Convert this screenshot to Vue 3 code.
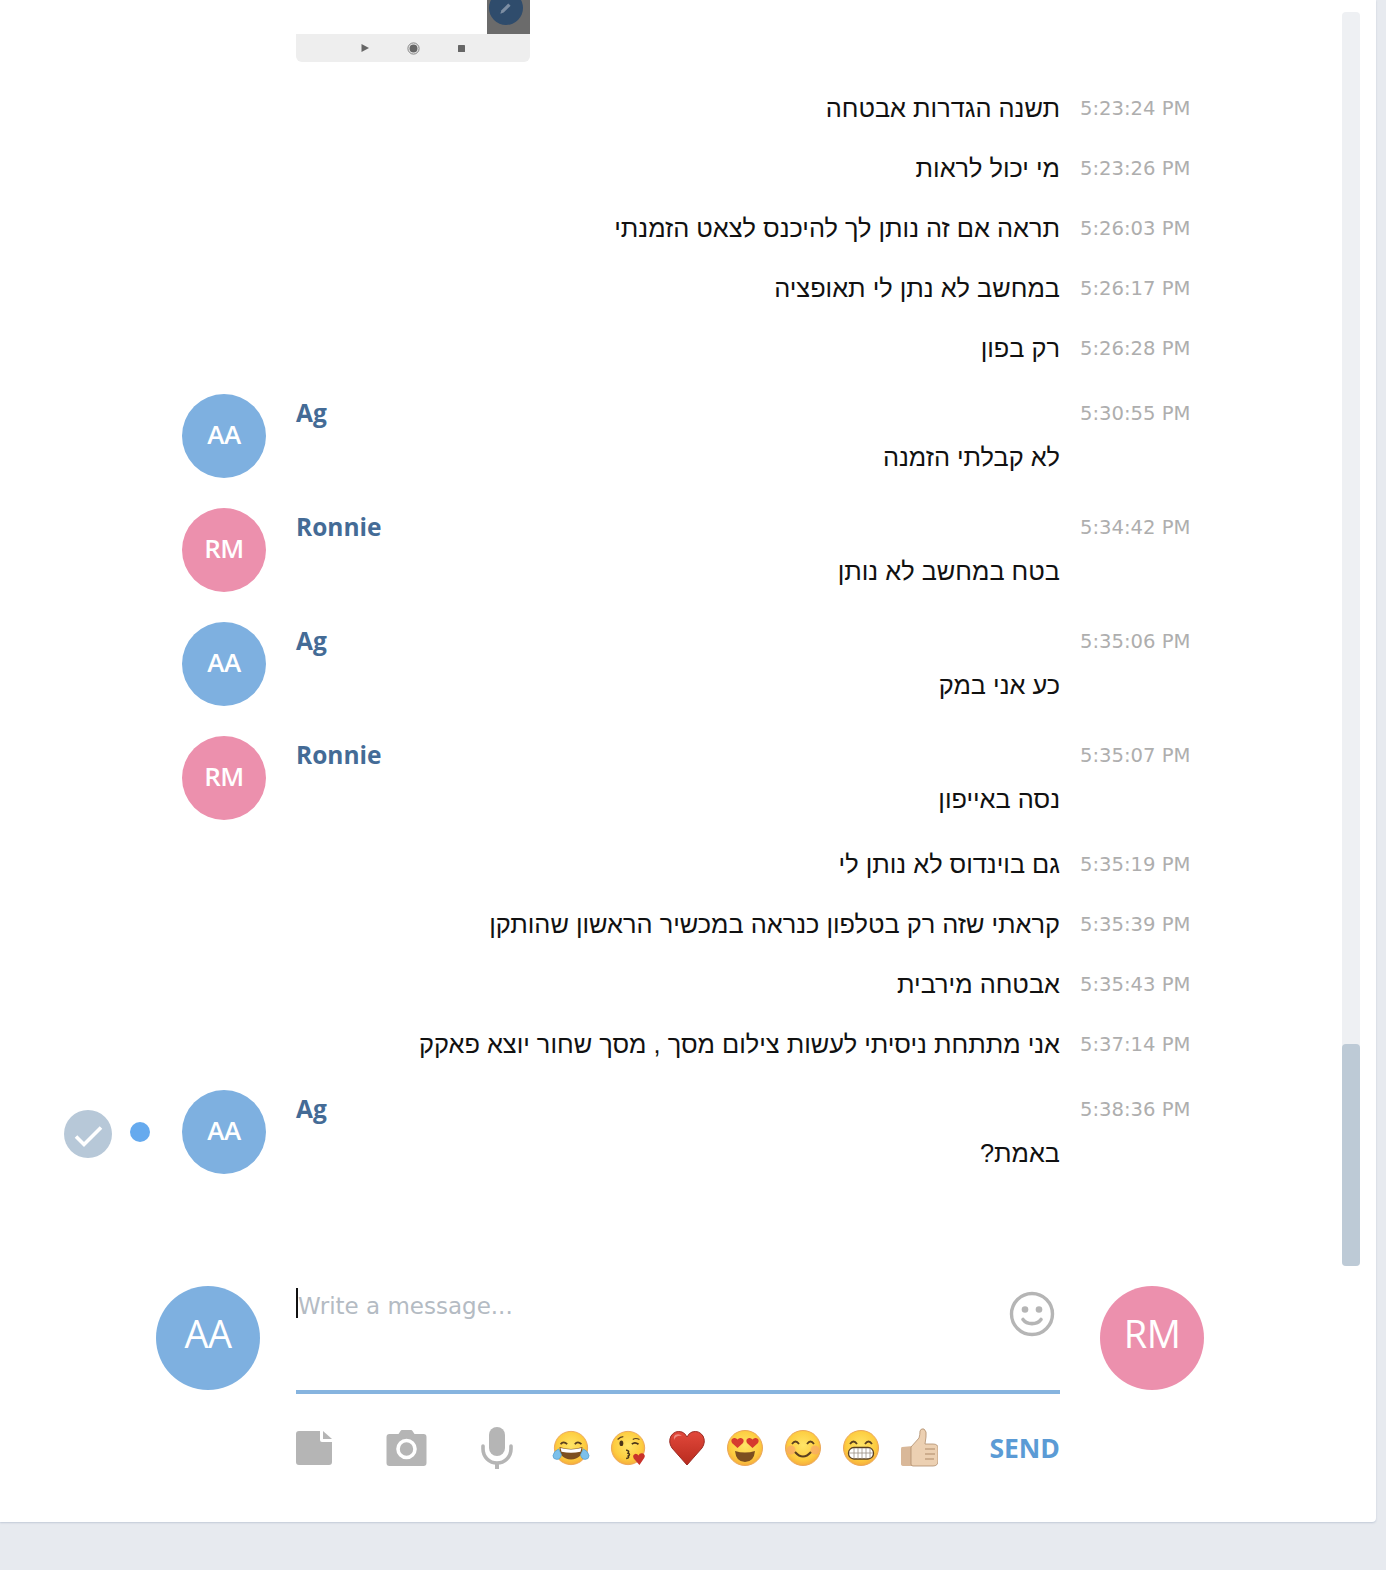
<template>
  <div class="page">
    <div class="card">
      <section class="log">
        <!-- shared screen recording, cut off by the scroll position -->
        <div class="shot">
          <div class="shot-image">
            <div class="shot-thumb">
              <span class="shot-pen">
                <svg width="16" height="16" viewBox="0 0 14 14"><path d="M2 12l1-3 6-6 2 2-6 6z" fill="#7d8ea3" /></svg>
              </span>
            </div>
          </div>
          <div class="shot-bar">
            <svg width="10" height="10" viewBox="0 0 10 10"><path d="M1.5 1L9 5 1.5 9z" fill="#666" /></svg>
            <svg width="13" height="13" viewBox="0 0 13 13"><circle cx="6.5" cy="6.5" r="5.6" fill="none" stroke="#777" stroke-width=".9" /><circle cx="6.5" cy="6.5" r="4" fill="#666" /></svg>
            <svg width="9" height="9" viewBox="0 0 9 9"><rect x="1" y="1" width="7" height="7" rx=".6" fill="#666" /></svg>
          </div>
        </div>

        <div
          v-for="m in messages"
          :key="m.time"
          class="row"
          :class="{ 'row-full': m.author }"
        >
          <div class="gutter">
            <template v-if="m.unread">
              <span class="check">
                <svg width="48" height="48" viewBox="0 0 48 48"><path d="M12 26.500l8 8 17-17" fill="none" stroke="#fff" stroke-width="3.600" /></svg>
              </span>
              <span class="dot"></span>
            </template>
          </div>
          <div class="avatar-cell">
            <div v-if="m.author" class="avatar" :class="m.initials === 'RM' ? 'pink' : 'blue'">{{ m.initials }}</div>
          </div>
          <div class="body">
            <div v-if="m.author" class="author">{{ m.author }}</div>
            <div class="text" dir="rtl">{{ m.text }}</div>
          </div>
          <div class="time">{{ m.time }}</div>
        </div>
      </section>

      <section class="composer">
        <div class="avatar large blue">AA</div>
        <div class="editor">
          <div class="input">
            <span class="caret"></span>
            <span class="placeholder">Write a message...</span>
            <svg class="smiley" width="46" height="46" viewBox="0 0 46 46">
              <circle cx="23" cy="23" r="20.500" fill="none" stroke="#b5b5b5" stroke-width="3.400" />
              <circle cx="16" cy="18.500" r="3.300" fill="#b5b5b5" />
              <circle cx="30" cy="18.500" r="3.300" fill="#b5b5b5" />
              <path d="M14 28.500c4 5.500 14 5.500 18 0" fill="none" stroke="#b5b5b5" stroke-width="3.600" stroke-linecap="round" />
            </svg>
          </div>
          <div class="tools">
            <div class="tool-icons">
              <svg width="36" height="34" viewBox="0 0 36 34"><path d="M3 0h21v9a2 2 0 0 0 2 2h10v20a3 3 0 0 1-3 3H3a3 3 0 0 1-3-3V3a3 3 0 0 1 3-3zM27 0l9 8h-9z" fill="#b5b5b5" /></svg>
              <svg width="41" height="36" viewBox="0 0 40 36"><path d="M12 4l2-3a2 2 0 0 1 1.500-1h9a2 2 0 0 1 1.500 1l2 3h9a3 3 0 0 1 3 3v26a3 3 0 0 1-3 3H3a3 3 0 0 1-3-3V7a3 3 0 0 1 3-3z" fill="#b5b5b5" /><circle cx="20" cy="19" r="8.500" fill="none" stroke="#fff" stroke-width="3.600" /></svg>
              <svg width="32" height="42" viewBox="0 0 32 42"><rect x="8" y="0" width="16" height="29" rx="8" fill="#b5b5b5" /><path d="M2 19v3a14 14 0 0 0 28 0v-3" fill="none" stroke="#b5b5b5" stroke-width="3.600" stroke-linecap="round" /><rect x="14" y="36" width="4" height="6" fill="#b5b5b5" /></svg>
            </div>
            <div class="emojis">
              <!-- tears of joy -->
              <svg class="emoji" width="38" height="38" viewBox="0 0 40 38">
                <circle cx="20" cy="19" r="17.500" fill="url(#face)" stroke="#eba75a" stroke-width="1" />
                <path d="M9 15q3-4 7 0M24 15q3-4 7 0" fill="none" stroke="#5a4020" stroke-width="1.800" />
                <path d="M8 18q12 4 24 0q0 13-12 13T8 18z" fill="#7c4f20" />
                <path d="M9 19q11 3 22 0l-1 4q-10 2-20 0z" fill="#fff" />
                <path d="M1 27q1-5 6-7l3 6q-1 5-5 5t-4-4zM39 27q-1-5-6-7l-3 6q1 5 5 5t4-4z" fill="#7cc0ea" stroke="#4f97c9" stroke-width=".7" />
              </svg>
              <!-- blowing a kiss -->
              <svg class="emoji" width="38" height="38" viewBox="0 0 40 38">
                <circle cx="19" cy="19" r="17.500" fill="url(#face)" stroke="#eba75a" stroke-width="1" />
                <path d="M8 10q3-3 6-3M24 10q3-2 7 0" fill="none" stroke="#5a4020" stroke-width="1.300" />
                <ellipse cx="12" cy="14" rx="2" ry="3" fill="#4a3418" />
                <path d="M23 15q3-3 7 0" fill="none" stroke="#4a3418" stroke-width="1.800" />
                <path d="M17 21q4 1 2 3.500q3 1 0 3q2 2-2 2.500" fill="none" stroke="#4a3418" stroke-width="1.600" />
                <path d="M31 37l-6-7q-2-4 2-5q2 0 3 2q1-3 4-2.500q4 1.500 2 5z" fill="#c9322b" />
              </svg>
              <!-- heart -->
              <svg class="emoji" width="38" height="38" viewBox="0 0 38 38">
                <path d="M19 36L4 19Q0 13 3 7q4-6 11-4 3 1 5 5 2-4 5-5 7-2 11 4 3 6-1 12z" fill="url(#heart)" stroke="#9c2a22" stroke-width="1" />
                <path d="M7 6q4-2 7 1-6-1-8 4-1-3 1-5z" fill="#ee8b80" />
              </svg>
              <!-- heart eyes -->
              <svg class="emoji" width="38" height="38" viewBox="0 0 38 38">
                <circle cx="19" cy="19" r="17.500" fill="url(#face)" stroke="#eba75a" stroke-width="1" />
                <path d="M11.500 19l-5.500-5q-2-4 2-5 2-.5 3.500 1.500 1.500-2 3.500-1.500 4 1 2 5zM26.500 19l-5.500-5q-2-4 2-5 2-.5 3.500 1.500 1.500-2 3.500-1.500 4 1 2 5z" fill="#d63a2f" />
                <path d="M9 22q10 3 20 0q-1 11-10 11T9 22z" fill="#7c4f20" />
              </svg>
              <!-- smiling, blushing -->
              <svg class="emoji" width="38" height="38" viewBox="0 0 38 38">
                <circle cx="19" cy="19" r="17.500" fill="url(#face)" stroke="#eba75a" stroke-width="1" />
                <circle cx="7" cy="21" r="4.500" fill="#f6a070" opacity=".6" />
                <circle cx="31" cy="21" r="4.500" fill="#f6a070" opacity=".6" />
                <path d="M8 15q3.500-5 7 0M23 15q3.500-5 7 0" fill="none" stroke="#5a4020" stroke-width="1.800" />
                <path d="M11 23q8 9 16 0" fill="none" stroke="#5a4020" stroke-width="2" />
              </svg>
              <!-- grin -->
              <svg class="emoji" width="38" height="38" viewBox="0 0 38 38">
                <circle cx="19" cy="19" r="17.500" fill="url(#face)" stroke="#eba75a" stroke-width="1" />
                <path d="M8 15q3.500-5 7 0M23 15q3.500-5 7 0" fill="none" stroke="#5a4020" stroke-width="1.800" />
                <rect x="6.500" y="18.500" width="25" height="11.500" rx="5.500" fill="#fff" stroke="#5a4020" stroke-width="1.300" />
                <path d="M7 24h24M12 19v10.500M16 19v11M20 19v11M24 19v11M28 19v10" stroke="#9a9184" stroke-width=".8" />
              </svg>
              <!-- thumbs up -->
              <svg class="emoji" width="38" height="40" viewBox="0 0 38 40">
                <path d="M2 19q-1 0-1 2v15q0 2 3 2h9V18z" fill="#d9b899" />
                <path d="M11 19l8-9q1-3 1-7 1-3 4-2 3 2 2 8l-1 7h8q5 0 5 4v13q0 5-5 5H13q-2 0-2-2z" fill="#ecd0b2" stroke="#b08e6d" stroke-width=".8" />
                <path d="M25 21h10M25 26h10M25 31h9" stroke="#ad8a68" stroke-width="1.200" />
              </svg>
            </div>
            <span class="send">SEND</span>
          </div>
        </div>
        <div class="avatar large pink">RM</div>
      </section>

      <div class="scrollbar">
        <div class="scrollbar-thumb"></div>
      </div>

      <!-- gradients used by the emoji drawings -->
      <svg class="defs" width="0" height="0">
        <defs>
          <radialGradient id="face" cx="50%" cy="42%" r="60%">
            <stop offset="0" stop-color="#ffe567" />
            <stop offset=".7" stop-color="#fdcc3f" />
            <stop offset="1" stop-color="#f5a93d" />
          </radialGradient>
          <linearGradient id="heart" x1="0" y1="0" x2="0" y2="1">
            <stop offset="0" stop-color="#e2483b" />
            <stop offset="1" stop-color="#b82b1e" />
          </linearGradient>
        </defs>
      </svg>
    </div>
  </div>
</template>

<script setup>
const aa = { author: "Ag", initials: "AA" };
const rm = { author: "Ronnie", initials: "RM" };

const messages = [
  { time: "5:23:24 PM", text: "תשנה הגדרות אבטחה" },
  { time: "5:23:26 PM", text: "מי יכול לראות" },
  { time: "5:26:03 PM", text: "תראה אם זה נותן לך להיכנס לצאט הזמנתי" },
  { time: "5:26:17 PM", text: "במחשב לא נתן לי תאופציה" },
  { time: "5:26:28 PM", text: "רק בפון" },
  { time: "5:30:55 PM", text: "לא קבלתי הזמנה", ...aa },
  { time: "5:34:42 PM", text: "בטח במחשב לא נותן", ...rm },
  { time: "5:35:06 PM", text: "כע אני במק", ...aa },
  { time: "5:35:07 PM", text: "נסה באייפון", ...rm },
  { time: "5:35:19 PM", text: "גם בוינדוס לא נותן לי" },
  { time: "5:35:39 PM", text: "קראתי שזה רק בטלפון כנראה במכשיר הראשון שהותקן" },
  { time: "5:35:43 PM", text: "אבטחה מירבית" },
  { time: "5:37:14 PM", text: "אני מתתחת ניסיתי לעשות צילום מסך , מסך שחור יוצא פאקק" },
  { time: "5:38:36 PM", text: "באמת?", unread: true, ...aa },
];
</script>

<style>
html,
body {
  margin: 0;
  background: #e7eaef;
}
</style>

<style scoped>
.page {
  height: 1570px;
  overflow: hidden;
  font-family: "DejaVu Sans", "Liberation Sans", sans-serif;
}

.card {
  position: relative;
  width: 1376px;
  height: 1522px;
  background: #fff;
  border-radius: 0 0 4px 0;
  box-shadow: 0 1px 2px rgba(120, 140, 170, 0.35);
}

.log {
  height: 1286px;
}

.shot {
  width: 234px;
  margin-left: 296px;
  margin-bottom: 16px;
}

.shot-image {
  height: 34px;
  display: flex;
  justify-content: flex-end;
}

.shot-thumb {
  width: 43px;
  background: #6b6b6b;
  overflow: hidden;
  display: flex;
  justify-content: flex-start;
}

.shot-pen {
  width: 34px;
  height: 34px;
  margin-top: -9px;
  margin-left: 2px;
  border-radius: 50%;
  background: #2f4c6c;
  display: flex;
  align-items: center;
  justify-content: center;
}

.shot-bar {
  height: 28px;
  background: #eeeeee;
  border-radius: 0 0 6px 6px;
  display: flex;
  align-items: center;
  justify-content: center;
  gap: 37px;
}

.row {
  display: grid;
  grid-template-columns: 182px 84px 794px 1fr;
  height: 60px;
  align-items: center;
}

.row-full {
  height: 114px;
  align-items: start;
  padding-top: 16px;
  box-sizing: border-box;
}

.gutter {
  display: flex;
  align-items: center;
  gap: 18px;
  padding-left: 64px;
  height: 84px;
}

.row:not(.row-full) .gutter {
  height: auto;
}

.check {
  width: 48px;
  height: 48px;
  margin-top: 4px;
  border-radius: 50%;
  background: #b7c8d8;
}

.check svg {
  display: block;
}

.dot {
  width: 20px;
  height: 20px;
  border-radius: 50%;
  background: #66aaee;
}

.avatar {
  display: flex;
  align-items: center;
  justify-content: center;
  width: 84px;
  height: 84px;
  padding-bottom: 4px;
  box-sizing: border-box;
  border-radius: 50%;
  color: #fff;
  font-family: "Open Sans", sans-serif;
  font-size: 26px;
  font-weight: 600;
  letter-spacing: -0.5px;
}

.avatar.large {
  width: 104px;
  height: 104px;
  font-size: 38px;
  font-weight: 500;
  padding-bottom: 10px;
}

.blue {
  background: #7eb0e0;
}

.pink {
  background: #ec90ad;
}

.body {
  padding-left: 30px;
}

.author {
  font-family: "Open Sans", sans-serif;
  font-size: 24.5px;
  font-weight: 700;
  line-height: 38px;
  color: #446b96;
}

.text {
  font-family: "Liberation Sans", "DejaVu Sans", sans-serif;
  font-size: 25.35px;
  line-height: 34px;
  color: #111;
  text-align: right;
}

.row-full .text {
  margin-top: 8px;
}

.time {
  padding-left: 20px;
  padding-top: 2px;
  font-size: 19.6px;
  line-height: 34px;
  color: #aeaeae;
  white-space: nowrap;
}

.row-full .time {
  margin-top: 2px;
  padding-top: 1px;
}

.composer {
  display: grid;
  grid-template-columns: 104px 764px 104px;
  column-gap: 36px;
  padding-left: 156px;
  align-items: start;
}

.composer .avatar.pink {
  margin-left: 4px;
}

.editor {
  display: flex;
  flex-direction: column;
}

.input {
  position: relative;
  height: 108px;
  box-sizing: border-box;
  border-bottom: 4px solid #86b4df;
  display: flex;
  align-items: flex-start;
}

.caret {
  width: 2px;
  height: 30px;
  margin-top: 2px;
  background: #111;
}

.placeholder {
  font-size: 23px;
  line-height: 34px;
  margin-top: 3px;
  color: #b4bbc3;
}

.smiley {
  margin-left: auto;
  margin-right: 5px;
  margin-top: 5px;
}

.tools {
  display: flex;
  align-items: center;
  height: 108px;
}

.tool-icons {
  display: flex;
  align-items: center;
  gap: 54px;
}

.emojis {
  display: flex;
  align-items: center;
  gap: 20px;
  margin-left: 39px;
}

.send {
  margin-left: auto;
  font-family: "Open Sans", sans-serif;
  font-size: 26.5px;
  font-weight: 700;
  color: #5b9bd5;
}

.scrollbar {
  position: absolute;
  top: 12px;
  left: 1342px;
  width: 18px;
  height: 1254px;
  background: #eef0f3;
  border-radius: 4px;
}

.scrollbar-thumb {
  margin-top: 1032px;
  height: 222px;
  background: #bdcad6;
  border-radius: 4px;
}

.defs {
  position: absolute;
}
</style>
